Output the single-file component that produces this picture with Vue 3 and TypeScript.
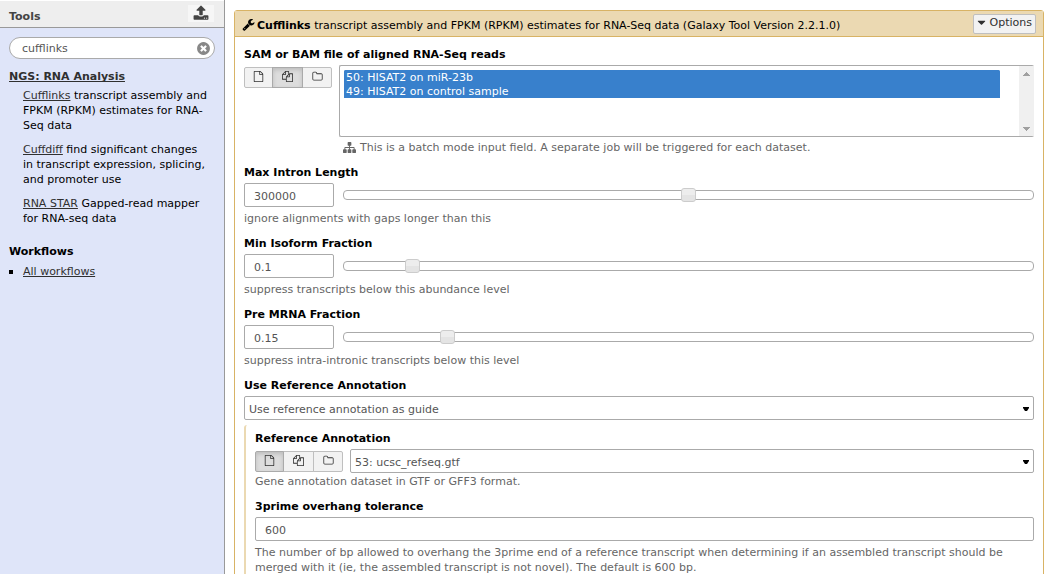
<script setup lang="ts">
import { ref } from 'vue'

interface Tool { name: string; text: string }
interface SliderField { id: string; label: string; value: number; max: number; step: number; help: string }
interface Source { key: string; label: string; icon: string }

const icons = {
  upload: 'M1344 1472q0-26-19-45t-45-19-45 19-19 45 19 45 45 19 45-19 19-45zm256 0q0-26-19-45t-45-19-45 19-19 45 19 45 45 19 45-19 19-45zm128-224v320q0 40-28 68t-68 28h-1472q-40 0-68-28t-28-68v-320q0-40 28-68t68-28h427q21 56 70.5 92t110.5 36h256q61 0 110.5-36t70.5-92h427q40 0 68 28t28 68zm-325-648q-17 40-59 40h-256v448q0 26-19 45t-45 19h-256q-26 0-45-19t-19-45v-448h-256q-42 0-59-40-17-39 14-69l448-448q18-19 45-19t45 19l448 448q31 30 14 69z',
  clear: 'M1277 1122q0-26-19-45l-181-181 181-181q19-19 19-45 0-27-19-46l-90-90q-19-19-46-19-26 0-45 19l-181 181-181-181q-19-19-45-19-27 0-46 19l-90 90q-19 19-19 46 0 26 19 45l181 181-181 181q-19 19-19 45 0 27 19 46l90 90q19 19 46 19 26 0 45-19l181-181 181 181q19 19 45 19 27 0 46-19l90-90q19-19 19-46zm387-226q0 209-103 385.5t-279.5 279.5-385.5 103-385.5-103-279.5-279.5-103-385.5 103-385.5 279.5-279.5 385.5-103 385.5 103 279.5 279.5 103 385.5z',
  wrench: 'M448 1472q0-26-19-45t-45-19-45 19-19 45 19 45 45 19 45-19 19-45zm644-420l-682 682q-37 37-90 37-52 0-91-37l-106-108q-38-36-38-90 0-53 38-91l681-681q39 98 114.5 173.5t173.5 114.5zm634-435q0 39-23 106-47 134-164.5 217.5t-258.5 83.5q-185 0-316.5-131.5t-131.5-316.5 131.5-316.5 316.5-131.5q58 0 121.5 16.5t107.5 46.5q16 11 16 28t-16 28l-293 169v224l193 107q5-3 79-48.5t135.5-81 70.5-35.5q15 0 23.5 10t8.5 25z',
  caret: 'M1408 704q0 26-19 45l-448 448q-19 19-45 19t-45-19l-448-448q-19-19-19-45t19-45 45-19h896q26 0 45 19t19 45z',
  file: 'M1596 380q28 28 48 76t20 88v1152q0 40-28 68t-68 28h-1344q-40 0-68-28t-28-68v-1600q0-40 28-68t68-28h896q40 0 88 20t76 48zm-444-244v376h376q-10-29-22-41l-313-313q-12-12-41-22zm384 1528v-1024h-416q-40 0-68-28t-28-68v-416h-768v1536h1280z',
  files: 'M1696 384q40 0 68 28t28 68v1216q0 40-28 68t-68 28h-960q-40 0-68-28t-28-68v-288h-544q-40 0-68-28t-28-68v-672q0-40 20-88t48-76l408-408q28-28 76-48t88-20h416q40 0 68 28t28 68v328q68-40 128-40h416zm-544 213l-299 299h299v-299zm-640-384l-299 299h299v-299zm196 647l316-316v-416h-384v416q0 40-28 68t-68 28h-416v640h512v-256q0-40 20-88t48-76zm956 804v-1152h-384v416q0 40-28 68t-68 28h-416v640h896z',
  folder: 'M1600 1312v-704q0-40-28-68t-68-28h-704q-40 0-68-28t-28-68v-64q0-40-28-68t-68-28h-320q-40 0-68 28t-28 68v960q0 40 28 68t68 28h1216q40 0 68-28t28-68zm128-704v704q0 92-66 158t-158 66h-1216q-92 0-158-66t-66-158v-960q0-92 66-158t158-66h320q92 0 158 66t66 158v32h672q92 0 158 66t66 158z',
  sitemap: 'M1792 1248v320q0 40-28 68t-68 28h-320q-40 0-68-28t-28-68v-320q0-40 28-68t68-28h96v-192h-512v192h96q40 0 68 28t28 68v320q0 40-28 68t-68 28h-320q-40 0-68-28t-28-68v-320q0-40 28-68t68-28h96v-192h-512v192h96q40 0 68 28t28 68v320q0 40-28 68t-68 28h-320q-40 0-68-28t-28-68v-320q0-40 28-68t68-28h96v-192q0-52 38-90t90-38h512v-192h-96q-40 0-68-28t-28-68v-320q0-40 28-68t68-28h320q40 0 68 28t28 68v320q0 40-28 68t-68 28h-96v192h512q52 0 90 38t38 90v192h96q40 0 68 28t28 68z'
}

const query = ref('cufflinks')

const tools: Tool[] = [
  { name: 'Cufflinks', text: 'transcript assembly and FPKM (RPKM) estimates for RNA-Seq data' },
  { name: 'Cuffdiff', text: 'find significant changes in transcript expression, splicing, and promoter use' },
  { name: 'RNA STAR', text: 'Gapped-read mapper for RNA-seq data' }
]

const sources: Source[] = [
  { key: 'single', label: 'Single dataset', icon: icons.file },
  { key: 'multiple', label: 'Multiple datasets', icon: icons.files },
  { key: 'collection', label: 'Dataset collection', icon: icons.folder }
]

const readsSource = ref('multiple')
const annotationSource = ref('single')
const reads = ref<string[]>(['50', '49'])
const annotationMode = ref('guide')
const annotation = ref('53')
const overhang = ref('600')

const sliders = ref<SliderField[]>([
  { id: 'intron', label: 'Max Intron Length', value: 300000, max: 600000, step: 1, help: 'ignore alignments with gaps longer than this' },
  { id: 'isoform', label: 'Min Isoform Fraction', value: 0.1, max: 1, step: 0.01, help: 'suppress transcripts below this abundance level' },
  { id: 'mrna', label: 'Pre MRNA Fraction', value: 0.15, max: 1, step: 0.01, help: 'suppress intra-intronic transcripts below this level' }
])
</script>

<template>
  <div class="app">
    <aside class="sidebar">
      <header class="side-head">
        <h2>Tools</h2>
        <button class="upload" type="button" aria-label="Upload data">
          <svg viewBox="0 0 1792 1792"><path :d="icons.upload" /></svg>
        </button>
      </header>
      <div class="side-body">
        <div class="search">
          <input v-model="query" type="text" aria-label="Search tools" />
          <button type="button" aria-label="Clear search" @click="query = ''">
            <svg viewBox="0 0 1792 1792"><path :d="icons.clear" /></svg>
          </button>
        </div>
        <h3><a href="#">NGS: RNA Analysis</a></h3>
        <ul class="tools">
          <li v-for="tool in tools" :key="tool.name"><a href="#">{{ tool.name }}</a> {{ tool.text }}</li>
        </ul>
        <h3 class="workflows-title">Workflows</h3>
        <ul class="workflows">
          <li><a href="#">All workflows</a></li>
        </ul>
      </div>
    </aside>

    <main class="main">
      <form class="card" @submit.prevent>
        <header class="card-head">
          <svg class="wrench" viewBox="0 0 1792 1792"><path :d="icons.wrench" /></svg>
          <h1><b>Cufflinks</b> transcript assembly and FPKM (RPKM) estimates for RNA-Seq data (Galaxy Tool Version 2.2.1.0)</h1>
          <button class="options" type="button">
            <svg viewBox="0 0 1792 1792"><path :d="icons.caret" /></svg>Options
          </button>
        </header>

        <div class="fields">
          <div class="field">
            <label for="reads">SAM or BAM file of aligned RNA-Seq reads</label>
            <div class="row">
              <div class="group list-group" role="group" aria-label="Reads source">
                <button v-for="s in sources" :key="s.key" type="button" :aria-label="s.label"
                  :class="{ active: readsSource === s.key }" @click="readsSource = s.key">
                  <svg viewBox="0 0 1792 1792"><path :d="s.icon" /></svg>
                </button>
              </div>
              <div class="reads">
                <div class="listbox">
                  <select id="reads" v-model="reads" multiple>
                    <option value="50">50: HISAT2 on miR-23b</option>
                    <option value="49">49: HISAT2 on control sample</option>
                  </select>
                  <div class="scrollbar" aria-hidden="true">
                    <svg viewBox="0 0 7 4"><path d="M3 0h1v1h1v1h1v1h1v1H0V3h1V2h1V1h1z" /></svg>
                    <svg viewBox="0 0 7 4"><path d="M0 0h7v1H6v1H5v1H4v1H3V3H2V2H1V1H0z" /></svg>
                  </div>
                </div>
                <p class="batch">
                  <svg viewBox="0 0 1792 1792"><path :d="icons.sitemap" /></svg>
                  This is a batch mode input field. A separate job will be triggered for each dataset.
                </p>
              </div>
            </div>
          </div>

          <div v-for="f in sliders" :key="f.id" class="field">
            <label :for="f.id">{{ f.label }}</label>
            <div class="row slider-row">
              <input :id="f.id" v-model.number="f.value" class="text number" type="text" />
              <div class="track">
                <input v-model.number="f.value" type="range" min="0" :max="f.max" :step="f.step" :aria-label="f.label" />
              </div>
            </div>
            <p class="help">{{ f.help }}</p>
          </div>

          <div class="field">
            <label for="mode">Use Reference Annotation</label>
            <div class="select">
              <select id="mode" v-model="annotationMode">
                <option value="guide">Use reference annotation as guide</option>
              </select>
              <svg viewBox="0 0 6 4"><path d="M0 0h6v1L4 4H2L0 1z" /></svg>
            </div>
          </div>

          <section class="nested">
            <div class="field">
              <label for="annotation">Reference Annotation</label>
              <div class="row">
                <div class="group" role="group" aria-label="Annotation source">
                  <button v-for="s in sources" :key="s.key" type="button" :aria-label="s.label"
                    :class="{ active: annotationSource === s.key }" @click="annotationSource = s.key">
                    <svg viewBox="0 0 1792 1792"><path :d="s.icon" /></svg>
                  </button>
                </div>
                <div class="select">
                  <select id="annotation" v-model="annotation">
                    <option value="53">53: ucsc_refseq.gtf</option>
                  </select>
                  <svg viewBox="0 0 6 4"><path d="M0 0h6v1L4 4H2L0 1z" /></svg>
                </div>
              </div>
              <p class="help tight">Gene annotation dataset in GTF or GFF3 format.</p>
            </div>
            <div class="field">
              <label for="overhang">3prime overhang tolerance</label>
              <input id="overhang" v-model="overhang" class="text" type="text" />
              <p class="help">The number of bp allowed to overhang the 3prime end of a reference transcript when determining if an assembled transcript should be merged with it (ie, the assembled transcript is not novel). The default is 600 bp.</p>
            </div>
          </section>
        </div>
      </form>
    </main>
  </div>
</template>

<style>
body {
  margin: 0;
  overflow: hidden;
  background: #fff;
}
</style>

<style scoped>
.app {
  display: flex;
  height: 100vh;
  overflow: hidden;
  font: 11px/15px "DejaVu Sans", Verdana, sans-serif;
  color: #000;
}
.app * {
  box-sizing: border-box;
}
h1, h2, h3, p, ul {
  margin: 0;
  padding: 0;
  font-size: 11px;
}
ul {
  list-style: none;
}
svg {
  display: block;
  flex: none;
  fill: currentColor;
}
button, input, select {
  margin: 0;
  font: inherit;
}
a {
  color: #303030;
  text-decoration: underline;
  text-decoration-skip-ink: none;
}

/* Tool panel */
.sidebar {
  flex: none;
  width: 225px;
  padding-top: 1px;
  border-right: 1px solid #999;
  background: linear-gradient(#fff 1px, #dfe5f9 1px);
}
.side-head {
  display: flex;
  align-items: flex-start;
  justify-content: space-between;
  height: 27px;
  padding: 4px 10px 0 9px;
  border-bottom: 1px solid #999;
  background: #eee;
}
.side-head h2 {
  padding-top: 4px;
  color: #444;
}
.upload {
  display: flex;
  justify-content: center;
  width: 26px;
  height: 17px;
  padding: 0;
  border: 0;
  background: #f6f6f6;
  color: #444;
}
.upload svg {
  width: 16px;
  height: 16px;
}
.side-body {
  padding: 9px;
}
.search {
  display: flex;
  align-items: center;
  height: 22px;
  padding: 0 3px 0 12px;
  border: 1px solid #aaa;
  border-radius: 11px;
  background: #fff;
}
.search input {
  flex: 1;
  min-width: 0;
  padding: 0;
  border: 0;
  outline: 0;
  background: none;
  color: #555;
}
.search button {
  padding: 0;
  border: 0;
  background: none;
  color: #888;
}
.search svg {
  width: 15px;
  height: 15px;
}
.side-body h3 {
  margin-top: 10px;
}
.tools {
  display: grid;
  gap: 9px;
  margin-top: 4px;
  padding: 0 6px 0 14px;
}
.side-body .workflows-title {
  margin-top: 18px;
}
.workflows {
  margin-top: 5px;
}
.workflows li {
  display: flex;
  align-items: center;
  gap: 10px;
}
.workflows li::before {
  content: "";
  width: 4px;
  height: 4px;
  background: #000;
}

/* Tool form */
.main {
  flex: 1;
  min-width: 0;
  padding: 10px 0 0 9px;
}
.card {
  border: 1px solid #d8b365;
  border-radius: 3px;
}
.card-head {
  display: flex;
  align-items: center;
  height: 26px;
  padding: 0 7px;
  border-bottom: 1px solid #d8b365;
  background: #ebd9b2;
}
.card-head h1 {
  flex: 1;
  margin-top: 3px;
  font-weight: normal;
}
.wrench {
  width: 13px;
  height: 13px;
  margin: 2px 2px 0 0;
}
.options {
  display: flex;
  align-items: center;
  gap: 2px;
  height: 20px;
  padding: 0 3px 2px 1px;
  border: 1px solid #bfbfbf;
  border-radius: 2px;
  background: #f2f2f2;
  color: #303030;
}
.options svg {
  width: 13px;
  height: 13px;
}
.fields {
  padding: 10px 9px;
}
.field + .field {
  margin-top: 10px;
}
label {
  display: block;
  margin-bottom: 3px;
  font-weight: bold;
}
.row {
  display: flex;
  align-items: center;
  gap: 7px;
}
.row:has(.reads) {
  align-items: flex-start;
}
.group {
  display: flex;
  flex: none;
}
.list-group {
  margin-top: 2px;
}
.group button {
  display: flex;
  align-items: center;
  justify-content: center;
  width: 31px;
  height: 21px;
  padding: 0 0 2px;
  border: 1px solid #bfbfbf;
  background: #f2f2f2;
  color: #303030;
}
.group button + button {
  margin-left: -1px;
}
.group button:first-child {
  width: 29px;
  border-radius: 2px 0 0 2px;
}
.group button:last-child {
  width: 30px;
  border-radius: 0 2px 2px 0;
}
.group button.active {
  z-index: 1;
  border-color: #aaa;
  background: #ddd;
  box-shadow: inset 0 2px 4px rgba(0, 0, 0, 0.15);
}
.group svg {
  width: 11px;
  height: 11px;
}
.reads {
  flex: 1;
  min-width: 0;
}
.listbox {
  display: flex;
  height: 72px;
  border: 1px solid #aaa;
  border-right: 0;
  border-radius: 2px;
}
.listbox select {
  flex: 1;
  min-width: 0;
  margin: 4px 19px 4px 4px;
  padding: 0;
  border: 0;
  outline: 0;
  background: #fff;
  line-height: 14px;
  overflow: hidden;
}
.listbox option {
  height: 14px;
  min-height: 14px;
  padding: 1px 2px 0;
  line-height: 14px;
}
.listbox option:checked {
  background: #3880cc linear-gradient(#3880cc, #3880cc);
  color: #fff;
  -webkit-text-fill-color: #fff;
}
.scrollbar {
  display: flex;
  flex-direction: column;
  align-items: center;
  justify-content: space-between;
  width: 15px;
  padding: 6px 0 5px;
  background: #f0f0f0;
  color: #a0a0a0;
}
.scrollbar svg {
  width: 7px;
  height: 4px;
}
.batch {
  display: flex;
  align-items: center;
  gap: 4px;
  margin-top: 3px;
  padding-left: 4px;
  color: #666;
}
.batch svg {
  width: 13px;
  height: 13px;
}
.slider-row {
  gap: 9px;
}
.text {
  display: block;
  width: 100%;
  height: 24px;
  padding: 2px 9px 0;
  border: 1px solid #aaa;
  border-radius: 2px;
  outline: 0;
  background: #fff;
  color: #555;
}
.number {
  flex: none;
  width: 90px;
}
.track {
  display: flex;
  align-items: center;
  flex: 1;
  height: 10px;
  border: 1px solid #aaa;
  border-radius: 4px;
}
.track input {
  flex: 1;
  min-width: 0;
  height: 14px;
  margin: 0 -8px;
  appearance: none;
  background: none;
}
.track input::-webkit-slider-thumb {
  appearance: none;
  width: 15px;
  height: 14px;
  border: 1px solid #ccc;
  border-radius: 3px;
  background: linear-gradient(#ededed 50%, #e4e4e4 50%);
}
.help {
  margin-top: 4px;
  color: #666;
}
.help.tight {
  margin-top: 1px;
}
.select {
  display: grid;
  flex: 1;
  align-items: center;
}
.select select, .select svg {
  grid-area: 1 / 1;
}
.select select {
  width: 100%;
  height: 24px;
  padding: 2px 20px 0 4px;
  border: 1px solid #aaa;
  border-radius: 2px;
  outline: 0;
  appearance: none;
  background: #fff;
  color: #555;
}
.select svg {
  justify-self: end;
  width: 6px;
  height: 4px;
  margin: 2px 5px 0 0;
  color: #000;
  pointer-events: none;
}
.nested {
  margin-top: 5px;
  padding: 6px 0 8px 9px;
  border-left: 2px solid #ebd9b2;
  border-radius: 3px;
}
</style>
